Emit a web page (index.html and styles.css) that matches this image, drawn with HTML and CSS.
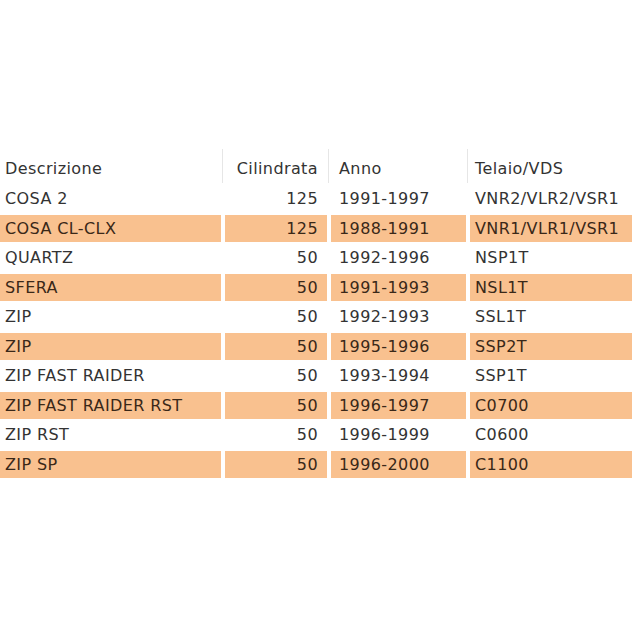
FILE: index.html
```html
<!DOCTYPE html>
<html>
<head>
<meta charset="utf-8">
<link rel="stylesheet" href="styles.css">
</head>
<body>
<div class="table">
  <div class="row head">
    <div class="c1">Descrizione</div>
    <div class="c2 sep">Cilindrata</div>
    <div class="c3 sep">Anno</div>
    <div class="c4 sep">Telaio/VDS</div>
  </div>
  <div class="row"><div class="c1">COSA 2</div><div class="c2">125</div><div class="c3">1991-1997</div><div class="c4">VNR2/VLR2/VSR1</div></div>
  <div class="row alt"><div class="c1">COSA CL-CLX</div><div class="c2">125</div><div class="c3">1988-1991</div><div class="c4">VNR1/VLR1/VSR1</div></div>
  <div class="row"><div class="c1">QUARTZ</div><div class="c2">50</div><div class="c3">1992-1996</div><div class="c4">NSP1T</div></div>
  <div class="row alt"><div class="c1">SFERA</div><div class="c2">50</div><div class="c3">1991-1993</div><div class="c4">NSL1T</div></div>
  <div class="row"><div class="c1">ZIP</div><div class="c2">50</div><div class="c3">1992-1993</div><div class="c4">SSL1T</div></div>
  <div class="row alt"><div class="c1">ZIP</div><div class="c2">50</div><div class="c3">1995-1996</div><div class="c4">SSP2T</div></div>
  <div class="row"><div class="c1">ZIP FAST RAIDER</div><div class="c2">50</div><div class="c3">1993-1994</div><div class="c4">SSP1T</div></div>
  <div class="row alt"><div class="c1">ZIP FAST RAIDER RST</div><div class="c2">50</div><div class="c3">1996-1997</div><div class="c4">C0700</div></div>
  <div class="row"><div class="c1">ZIP RST</div><div class="c2">50</div><div class="c3">1996-1999</div><div class="c4">C0600</div></div>
  <div class="row alt"><div class="c1">ZIP SP</div><div class="c2">50</div><div class="c3">1996-2000</div><div class="c4">C1100</div></div>
</div>
</body>
</html>
```
FILE: styles.css
```css
html, body {
  margin: 0;
  padding: 0;
  background: #ffffff;
}
body {
  width: 632px;
  height: 632px;
  overflow: hidden;
  font-family: "DejaVu Sans", sans-serif;
  font-size: 16px;
  letter-spacing: 0.4px;
  color: #333333;
}
.table {
  padding-top: 149px;
  display: flex;
  flex-direction: column;
  gap: 2px;
}
.row {
  display: grid;
  grid-template-columns: 221px 102px 135px 1fr;
  column-gap: 4px;
  height: 27.5px;
}
.row > div {
  display: flex;
  align-items: center;
  white-space: nowrap;
}
.head {
  height: 34px;
}
.head > div {
  padding-top: 4px;
}
.alt > div {
  background: #f9c18f;
  color: #3a2818;
}
.c1 { padding-left: 5px; }
.c2 { justify-content: flex-end; padding-right: 9px; }
.c3 { padding-left: 8px; }
.c4 { padding-left: 5px; }
.sep {
  position: relative;
}
.sep::before {
  content: "";
  position: absolute;
  left: -3px;
  top: 0;
  bottom: 0;
  width: 1px;
  background: #e6e6e6;
}
```
